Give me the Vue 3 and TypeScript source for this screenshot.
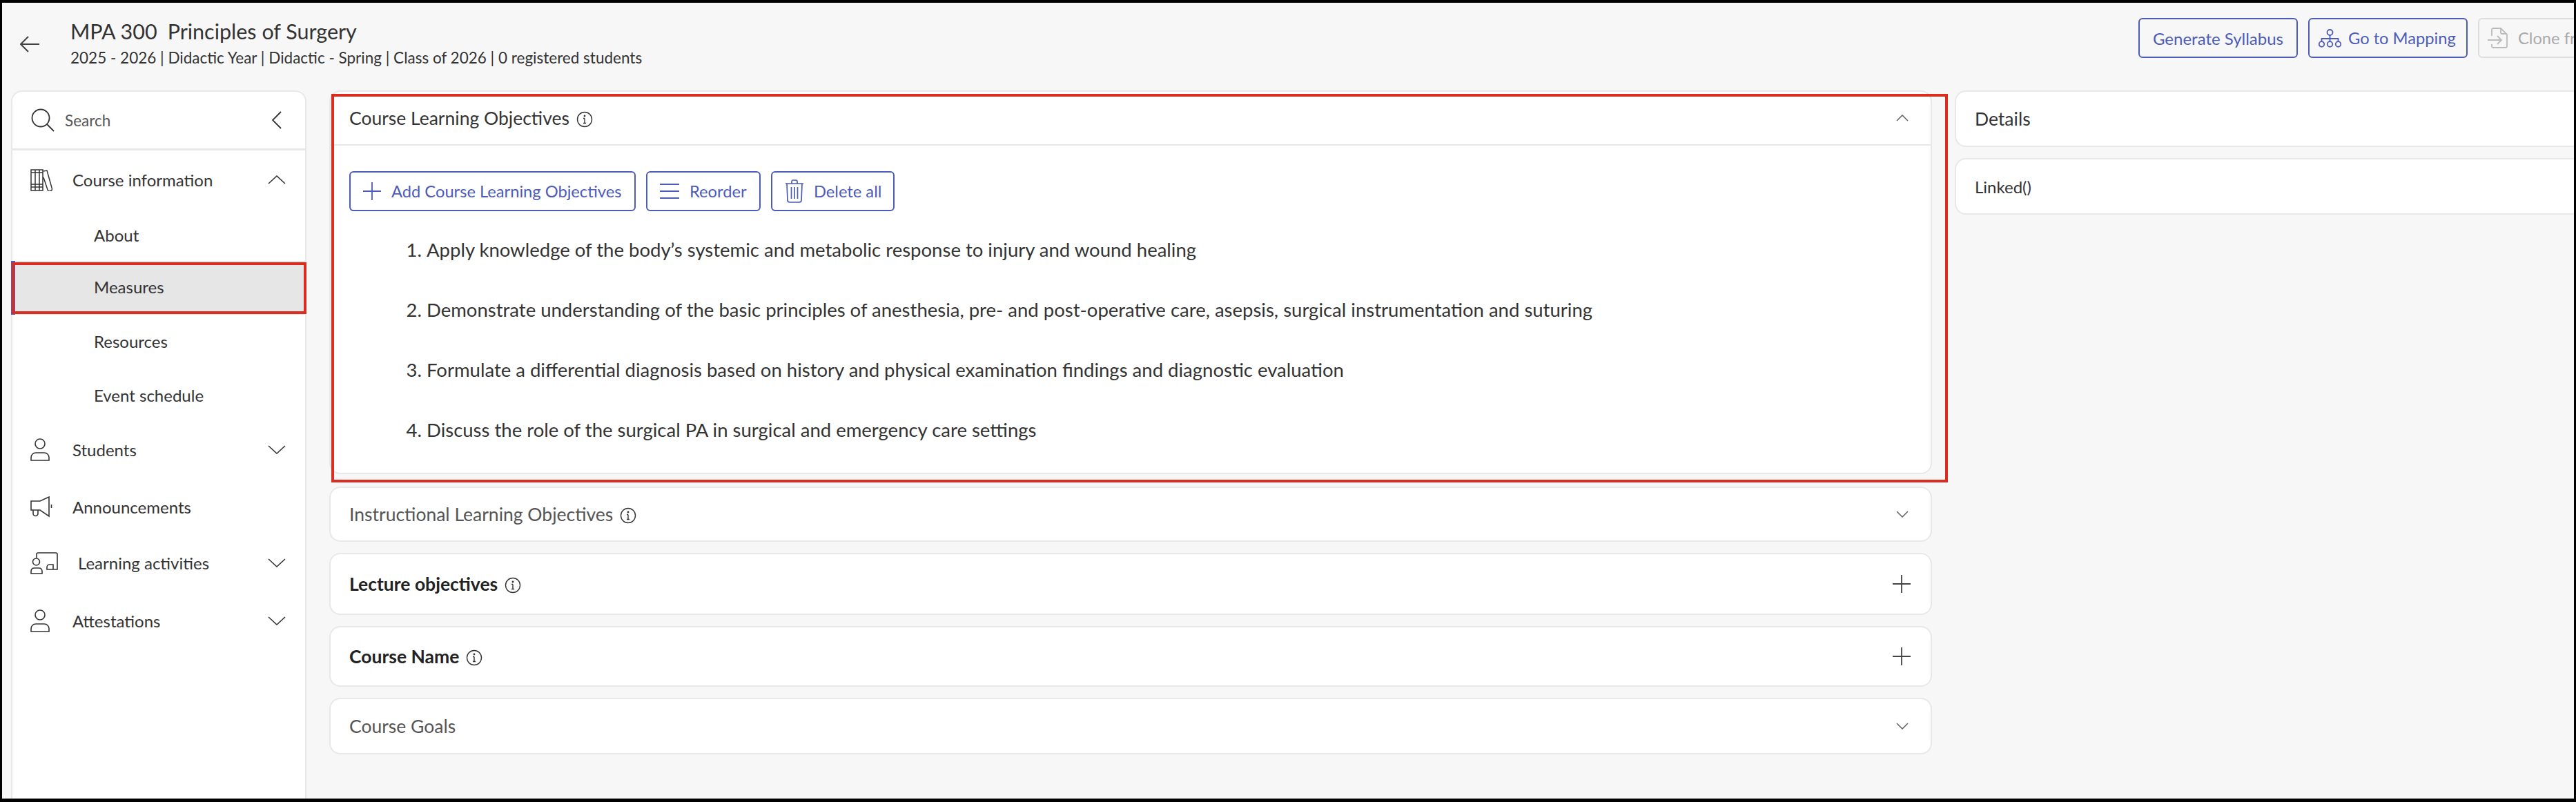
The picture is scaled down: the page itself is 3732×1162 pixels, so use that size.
<script setup lang="ts">
interface NavRow {
  label: string;
  icon?: string;
  chevron?: "up" | "down";
  height: number;
  active?: boolean;
}

const navRows: NavRow[] = [
  { label: "Course information", icon: "books", chevron: "up", height: 88 },
  { label: "About", height: 72 },
  { label: "Measures", height: 78, active: true },
  { label: "Resources", height: 80 },
  { label: "Event schedule", height: 76 },
  { label: "Students", icon: "person", chevron: "down", height: 82 },
  { label: "Announcements", icon: "megaphone", height: 84 },
  { label: "Learning activities", icon: "board", chevron: "down", height: 78 },
  { label: "Attestations", icon: "person", chevron: "down", height: 90 },
];

const objectives = [
  "Apply knowledge of the body’s systemic and metabolic response to injury and wound healing",
  "Demonstrate understanding of the basic principles of anesthesia, pre- and post-operative care, asepsis, surgical instrumentation and suturing",
  "Formulate a differential diagnosis based on history and physical examination findings and diagnostic evaluation",
  "Discuss the role of the surgical PA in surgical and emergency care settings",
];

interface Section {
  title: string;
  info: boolean;
  bold?: boolean;
  action: "chevron" | "plus";
  height: number;
}

const sections: Section[] = [
  { title: "Instructional Learning Objectives", info: true, action: "chevron", height: 80 },
  { title: "Lecture objectives", info: true, bold: true, action: "plus", height: 90 },
  { title: "Course Name", info: true, bold: true, action: "plus", height: 88 },
  { title: "Course Goals", info: false, action: "chevron", height: 82 },
];
</script>

<template>
  <div class="page">
    <header class="topbar">
      <svg class="back" viewBox="0 0 28 24" fill="none" stroke="currentColor" stroke-width="2">
        <path d="M28 12H1M12 1 1 12l11 11" />
      </svg>
      <div class="heading">
        <div class="course-title"><span>MPA 300</span><span>Principles of Surgery</span></div>
        <div class="course-meta">2025 - 2026 | Didactic Year | Didactic - Spring | Class of 2026 | 0 registered students</div>
      </div>
      <div class="top-actions">
        <button class="btn btn-syllabus">Generate Syllabus</button>
        <button class="btn btn-mapping">
          <svg class="tree-icon" viewBox="0 0 33 27" fill="none" stroke="currentColor" stroke-width="1.800">
            <circle cx="16.500" cy="5" r="4" />
            <path d="M16.500 9v9M4.500 18v-4h24v4" />
            <circle cx="4.500" cy="22" r="3.800" />
            <circle cx="16.500" cy="22" r="3.800" />
            <circle cx="28.500" cy="22" r="3.800" />
          </svg>
          Go to Mapping
        </button>
        <button class="btn btn-clone">
          <svg class="clone-icon" viewBox="0 0 29 30" fill="none" stroke="currentColor" stroke-width="1.800">
            <path d="M6 12V3a2 2 0 0 1 2-2h11l9 9v17a2 2 0 0 1-2 2H8a2 2 0 0 1-2-2v-3M19 1v6a2 2 0 0 0 2 2h7M0 18h20M14 12l6 6-6 6" />
          </svg>
          Clone from
        </button>
      </div>
    </header>

    <div class="content">
      <aside class="sidebar">
        <div class="search-row">
          <svg class="search-icon" viewBox="0 0 34 34" fill="none" stroke="#333" stroke-width="1.800">
            <circle cx="14" cy="14" r="12.500" />
            <path d="m23 23 10 10" />
          </svg>
          <span class="search-label">Search</span>
          <svg class="collapse" viewBox="0 0 14 26" fill="none" stroke="#333" stroke-width="1.800">
            <path d="M13 1 1 13l12 12" />
          </svg>
        </div>
        <nav>
          <div
            v-for="row in navRows"
            :key="row.label"
            class="nav-row"
            :class="{ active: row.active, child: !row.icon }"
            :style="{ height: row.height + 'px' }"
          >
            <span v-if="row.icon" class="nav-slot">
              <svg v-if="row.icon === 'books'" class="icon-books" viewBox="0 0 32 32" fill="none" stroke="#333" stroke-width="1.500">
                <path d="M1 1h17v30H1zM7 1v30M13 1v30M1 5h17M1 26h17M1 22h17M19 3l5-1 7 25a3 3 0 0 1-6 3l-6-18" />
              </svg>
              <svg v-else-if="row.icon === 'person'" class="icon-person" viewBox="0 0 28 33" fill="none" stroke="#333" stroke-width="1.600">
                <circle cx="14" cy="8" r="7" />
                <path d="M1 32v-4c0-4 3-7 7-7h12c4 0 7 3 7 7v4z" />
              </svg>
              <svg v-else-if="row.icon === 'megaphone'" class="icon-mega" viewBox="0 0 32 31" fill="none" stroke="#333" stroke-width="1.600">
                <path d="M1 7h13L27 1v28L14 20H1zM4 20v5a3.500 3.500 0 0 0 7 0v-5M30.500 12v5" />
              </svg>
              <svg v-else-if="row.icon === 'board'" class="icon-board" viewBox="0 0 40 32" fill="none" stroke="#333" stroke-width="1.600">
                <path d="M9 8V3a2 2 0 0 1 2-2h26a2 2 0 0 1 2 2v22H24v-3a4 4 0 0 1 4-4h5v7" />
                <circle cx="8.500" cy="14" r="5" />
                <path d="M1 31v-3c0-3 2-5 5-5h6c3 0 5 2 5 5v3z" />
              </svg>
            </span>
            <span class="nav-label" :class="{ shifted: row.icon === 'board' }">{{ row.label }}</span>
            <svg v-if="row.chevron" class="nav-chevron" viewBox="0 0 26 13" fill="none" stroke="#333" stroke-width="1.600">
              <path v-if="row.chevron === 'down'" d="m1 1 12 11L25 1" />
              <path v-else d="M1 12 13 1l12 11" />
            </svg>
            <span v-if="row.active" class="active-bar"></span>
            <span v-if="row.active" class="mark"></span>
          </div>
        </nav>
      </aside>

      <main class="main">
        <section class="card open">
          <div class="card-head">
            <span class="card-title">Course Learning Objectives</span>
            <svg class="info" viewBox="0 0 24 24" fill="none" stroke="#333" stroke-width="1.400">
              <circle cx="12" cy="12" r="10.500" />
              <path d="M12 10.500v7M10 10.500h2M10 17.500h4" />
              <circle cx="12" cy="7" r="0.700" />
            </svg>
            <svg class="card-chevron" viewBox="0 0 18 10" fill="none" stroke="#666" stroke-width="1.600">
              <path d="m1 9 8-8 8 8" />
            </svg>
          </div>
          <div class="card-body">
            <div class="toolbar">
              <button class="btn btn-add">
                <svg class="plus-icon" viewBox="0 0 26 26" fill="none" stroke="currentColor" stroke-width="1.800">
                  <path d="M13 0v26M0 13h26" />
                </svg>
                Add Course Learning Objectives
              </button>
              <button class="btn btn-reorder">
                <svg class="reorder-icon" viewBox="0 0 28 24" fill="none" stroke="currentColor" stroke-width="2">
                  <path d="M0 2h28M0 12h28M0 22h28" />
                </svg>
                Reorder
              </button>
              <button class="btn btn-delete">
                <svg class="trash-icon" viewBox="0 0 28 34" fill="none" stroke="currentColor" stroke-width="1.700">
                  <path d="M1 6h26M10 6V3a2 2 0 0 1 2-2h4a2 2 0 0 1 2 2v3M3 6l1 24a3 3 0 0 0 3 3h14a3 3 0 0 0 3-3l1-24M9.500 11v17M14 11v17M18.500 11v17" />
                </svg>
                Delete all
              </button>
            </div>
            <ol class="objectives">
              <li v-for="item in objectives" :key="item">{{ item }}</li>
            </ol>
          </div>
          <span class="mark"></span>
        </section>

        <section
          v-for="s in sections"
          :key="s.title"
          class="card"
          :style="{ height: s.height + 'px' }"
        >
          <div class="card-head plain">
            <span class="card-title" :class="s.bold ? 'strong' : 'muted'">{{ s.title }}</span>
            <svg v-if="s.info" class="info" viewBox="0 0 24 24" fill="none" stroke="#333" stroke-width="1.400">
              <circle cx="12" cy="12" r="10.500" />
              <path d="M12 10.500v7M10 10.500h2M10 17.500h4" />
              <circle cx="12" cy="7" r="0.700" />
            </svg>
            <svg v-if="s.action === 'chevron'" class="card-chevron" viewBox="0 0 18 10" fill="none" stroke="#666" stroke-width="1.600">
              <path d="m1 1 8 8 8-8" />
            </svg>
            <svg v-else class="card-plus" viewBox="0 0 26 26" fill="none" stroke="#444" stroke-width="1.800">
              <path d="M13 0v26M0 13h26" />
            </svg>
          </div>
        </section>
      </main>

      <aside class="details">
        <div class="detail-card head">Details</div>
        <div class="detail-card linked">Linked()</div>
      </aside>
    </div>
  </div>
</template>

<style>
html,
body {
  margin: 0;
  background: #000;
}
</style>

<style scoped>
.page {
  box-sizing: border-box;
  width: 3732px;
  height: 1162px;
  border: solid #000;
  border-width: 4px 3px 5px 3px;
  background: #f7f7f7;
  overflow: hidden;
  display: flex;
  flex-direction: column;
  font-family: Lato, "Noto Sans", sans-serif;
  color: #333;
}

.topbar {
  height: 127px;
  flex: none;
  display: flex;
  align-items: flex-start;
  padding-left: 26px;
}

.back {
  width: 28px;
  height: 24px;
  margin-top: 48px;
  color: #444;
  flex: none;
}

.heading {
  margin-left: 45px;
  padding-top: 22px;
}

.course-title {
  display: flex;
  gap: 15px;
  font-size: 30.500px;
  line-height: 38px;
  color: #333;
}

.course-meta {
  font-size: 22.500px;
  line-height: 30px;
  margin-top: 5px;
  color: #333;
}

.top-actions {
  margin-left: auto;
  margin-right: -61px;
  padding-top: 22px;
  display: flex;
  gap: 15px;
}

.btn {
  box-sizing: border-box;
  height: 58px;
  flex: none;
  display: inline-flex;
  align-items: center;
  padding: 0 18px;
  background: transparent;
  border: 2px solid #4c5cb8;
  border-radius: 6px;
  font: inherit;
  font-size: 23.700px;
  color: #4c5cb8;
  white-space: nowrap;
}

.btn-syllabus {
  width: 231px;
  justify-content: center;
  font-size: 24px;
}

.btn-mapping {
  width: 231px;
  gap: 10px;
  padding: 0 13px;
}

.btn-clone {
  width: 200px;
  border-color: #ddd;
  color: #aaa;
  gap: 15px;
  padding: 0 12px;
}

.tree-icon {
  width: 33px;
  height: 27px;
  flex: none;
}

.clone-icon {
  width: 29px;
  height: 30px;
  flex: none;
  color: #bbb;
}

.content {
  flex: 1;
  display: flex;
  min-height: 0;
  padding-left: 13px;
}

.sidebar {
  width: 428px;
  flex: none;
  box-sizing: border-box;
  background: #fff;
  border: 2px solid #e8e8e8;
  border-bottom: 0;
  border-radius: 16px 16px 0 0;
}

.search-row {
  height: 85px;
  box-sizing: border-box;
  border-bottom: 3px solid #e8e8e8;
  display: flex;
  align-items: center;
  padding: 0 34px 0 27px;
}

.search-icon {
  width: 34px;
  height: 34px;
  flex: none;
}

.search-label {
  margin-left: 15px;
  font-size: 22.500px;
  color: #555;
}

.collapse {
  width: 14px;
  height: 26px;
  margin-left: auto;
}

.nav-row {
  position: relative;
  box-sizing: border-box;
  display: flex;
  align-items: center;
  padding: 0 28px 3px 26px;
  font-size: 24px;
  color: #333;
}

.nav-row.child {
  padding-left: 118px;
}

.nav-row.active {
  background: #e6e6e6;
}

.active-bar {
  position: absolute;
  left: -2px;
  top: 0;
  bottom: 0;
  width: 6px;
  background: #4c5cb8;
}

.nav-slot {
  width: 61px;
  flex: none;
  display: flex;
  align-items: center;
}

.icon-books {
  width: 32px;
  height: 32px;
}

.icon-person {
  width: 28px;
  height: 33px;
}

.icon-mega {
  width: 32px;
  height: 31px;
}

.icon-board {
  width: 40px;
  height: 32px;
}

.nav-label.shifted {
  margin-left: 8px;
}

.nav-chevron {
  width: 26px;
  height: 13px;
  margin-left: auto;
}

.mark {
  position: absolute;
  inset: 0;
  border: 4px solid #d92d20;
  pointer-events: none;
}

.nav-row .mark {
  inset: 2px -2px 1px -1px;
}

.main {
  width: 2322px;
  flex: none;
  margin-left: 33px;
  display: flex;
  flex-direction: column;
  gap: 16px;
}

.card {
  position: relative;
  box-sizing: border-box;
  background: #fff;
  border: 2px solid #e8e8e8;
  border-radius: 16px;
  flex: none;
}

.card.open {
  height: 556px;
  margin-bottom: 2px;
}

.card.open .mark {
  inset: 3px -25px -14px 1px;
}

.card-head {
  height: 78px;
  box-sizing: border-box;
  border-bottom: 2px solid #e8e8e8;
  display: flex;
  align-items: center;
  padding: 0 32px 0 27px;
}

.card-head.plain {
  height: 100%;
  border-bottom: 0;
}

.card-title {
  font-size: 26.500px;
  color: #333;
}

.card-title.muted {
  color: #555;
}

.card-title.strong {
  font-weight: 700;
  color: #222;
}

.info {
  width: 24px;
  height: 24px;
  margin: 4px 0 0 10px;
  flex: none;
}

.card-chevron {
  width: 18px;
  height: 10px;
  margin-left: auto;
}

.card-plus {
  width: 26px;
  height: 26px;
  margin-left: auto;
  margin-right: -3px;
}

.card-body {
  padding: 37px 27px 0;
}

.toolbar {
  display: flex;
  gap: 15px;
}

.btn-add {
  width: 415px;
  gap: 15px;
}

.btn-reorder {
  width: 166px;
  gap: 15px;
}

.btn-delete {
  width: 179px;
  gap: 14px;
}

.plus-icon {
  width: 26px;
  height: 26px;
  flex: none;
}

.reorder-icon {
  width: 28px;
  height: 24px;
  flex: none;
}

.trash-icon {
  width: 28px;
  height: 34px;
  flex: none;
}

.objectives {
  margin: 27px 0 0;
  padding-left: 112px;
  font-size: 27.500px;
  color: #333;
}

.objectives li {
  height: 87px;
  line-height: 58px;
}

.details {
  width: 1000px;
  flex: none;
  margin-left: 33px;
  display: flex;
  flex-direction: column;
  gap: 16px;
}

.detail-card {
  box-sizing: border-box;
  background: #fff;
  border: 2px solid #e8e8e8;
  border-right: 0;
  border-radius: 16px 0 0 16px;
  display: flex;
  align-items: center;
  padding-left: 27px;
  color: #333;
}

.detail-card.head {
  height: 82px;
  font-size: 26.500px;
}

.detail-card.linked {
  height: 82px;
  font-size: 24px;
}
</style>
